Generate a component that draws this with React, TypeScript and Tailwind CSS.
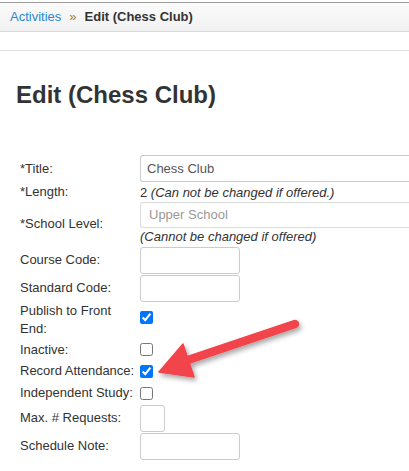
import type { ReactNode } from 'react'

const font = { fontFamily: '"Liberation Sans", Arial, sans-serif' }

function Row({ label, children, className }: { label: ReactNode; children: ReactNode; className: string }) {
  return (
    <div className={`grid grid-cols-[120px_1fr] ${className}`}>
      <div className="pr-1 text-[13px] leading-[18px] text-[#333]">{label}</div>
      <div className="flex min-w-0 flex-col">{children}</div>
    </div>
  )
}

function Text({ w, value, muted }: { w: string; value?: string; muted?: boolean }) {
  return (
    <input
      readOnly
      defaultValue={value}
      className={`${w} h-[27px] rounded-[3px] border border-[#ccc] bg-white px-[6px] text-[13px] outline-none ${muted ? 'text-[#999]' : 'text-[#555]'}`}
    />
  )
}

function Check({ on }: { on?: boolean }) {
  return <input type="checkbox" defaultChecked={on} className="m-0 h-[13px] w-[13px]" />
}

export default function App() {
  return (
    <div className="relative h-[471px] w-[409px] overflow-hidden bg-white" style={font}>
      <div className="mt-[2px] flex h-[30px] items-center border-t border-b border-t-[#9c9c9c] border-b-[#d9d9d9] bg-gradient-to-b from-[#fbfbfb] to-[#f1f1f1] pl-[10px] text-[13px]">
        <span className="text-[#2a87d0]">Activities</span>
        <span className="mx-[8px] text-[13px] text-[#a07d30]">»</span>
        <span className="font-bold text-[#333]">Edit (Chess Club)</span>
      </div>
      <div className="h-[19px] border-b border-[#e0e0e0]" />

      <h1 className="ml-[16px] mt-[30px] text-[24px] font-bold leading-[28px] text-[#333]">Edit (Chess Club)</h1>

      <div className="mt-[45px] pl-[20px]">
        <Row label="*Title:" className="h-[29px] items-center">
          <input
            readOnly
            defaultValue="Chess Club"
            className="-mr-[20px] h-[27px] w-[280px] rounded-l-[3px] border border-r-0 border-[#ccc] bg-white px-[6px] text-[13px] text-[#555] outline-none"
          />
        </Row>
        <Row label="*Length:" className="h-[17px] items-center">
          <span className="text-[13px] leading-[17px] text-[#333]">
            2 <i>(Can not be changed if offered.)</i>
          </span>
        </Row>
        <Row label="*School Level:" className="h-[46px] items-center pt-[1px]">
          <input
            readOnly
            defaultValue="Upper School"
            className="-mr-[20px] h-[26px] w-[280px] rounded-l-[3px] border border-r-0 border-[#ddd] bg-white px-[8px] text-[13px] text-[#999] outline-none"
          />
          <i className="text-[13px] leading-[18px] text-[#333]">(Cannot be changed if offered)</i>
        </Row>
        <Row label="Course Code:" className="h-[28px] items-center">
          <Text w="w-[100px]" />
        </Row>
        <Row label="Standard Code:" className="h-[28px] items-center">
          <Text w="w-[100px]" />
        </Row>
        <Row label="Publish to Front End:" className="h-[37px] items-start">
          <div className="pt-[5px]">
            <Check on />
          </div>
        </Row>
        <Row label="Inactive:" className="h-[21px] items-center">
          <Check />
        </Row>
        <Row label="Record Attendance:" className="h-[22px] items-center">
          <Check on />
        </Row>
        <Row label="Independent Study:" className="h-[22px] items-center">
          <Check />
        </Row>
        <Row label="Max. # Requests:" className="h-[28px] items-center">
          <Text w="w-[25px]" />
        </Row>
        <Row label="Schedule Note:" className="h-[28px] items-center">
          <Text w="w-[100px]" />
        </Row>
      </div>

      <svg className="pointer-events-none absolute left-0 top-0" width="409" height="471" viewBox="0 0 409 471">
        <defs>
          <filter id="sh" x="-20%" y="-20%" width="140%" height="140%">
            <feDropShadow dx="2" dy="3" stdDeviation="2.5" floodColor="#000" floodOpacity="0.35" />
          </filter>
        </defs>
        <g filter="url(#sh)" fill="#f2444b" stroke="#f2444b">
          <line x1="295" y1="324" x2="182" y2="362" strokeWidth="8.5" strokeLinecap="round" />
          <polygon points="159,372 183,344 194,377" strokeWidth="1.5" strokeLinejoin="round" />
        </g>
      </svg>
    </div>
  )
}
